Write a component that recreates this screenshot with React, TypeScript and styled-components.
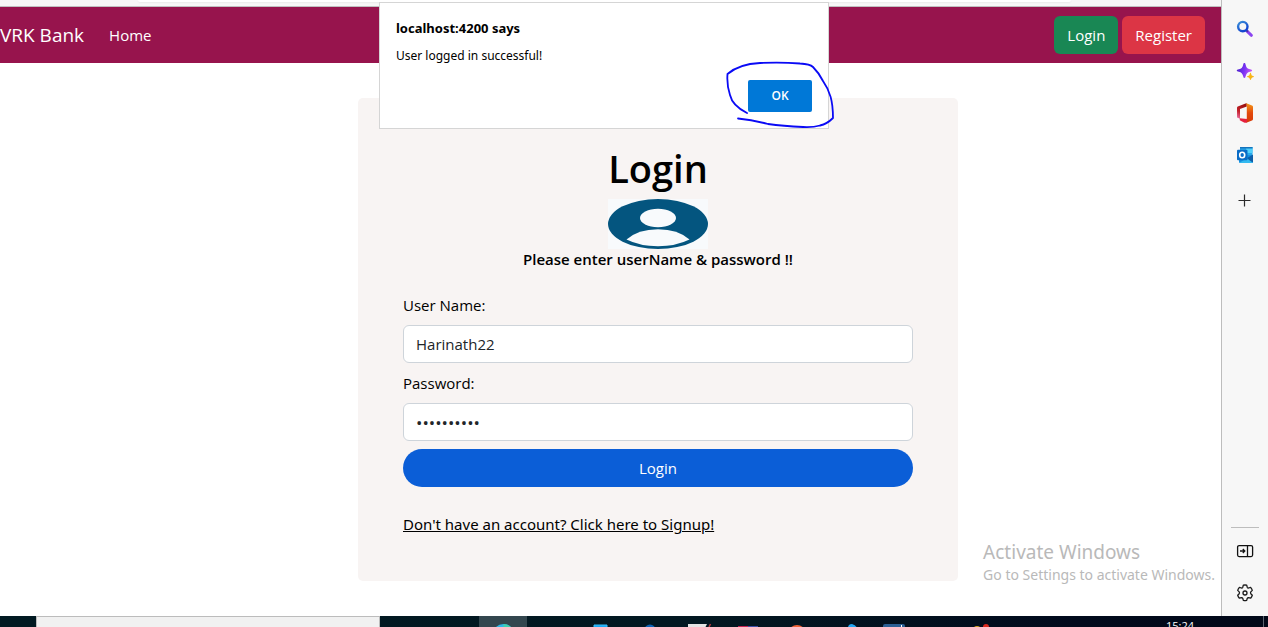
import React from "react";
import styled, { createGlobalStyle } from "styled-components";

const GlobalStyle = createGlobalStyle`
  *, *::before, *::after { box-sizing: border-box; }
  body {
    margin: 0;
    font-family: "Segoe UI", "Open Sans", "Noto Sans", sans-serif;
    font-size: 15px;
    line-height: 24px;
    color: #000;
    background: #fff;
  }
  button, input { font: inherit; }
`;

const wideFont = `"Segoe UI", "Noto Sans", "Open Sans", sans-serif`;

const Desktop = styled.div`
  display: flex;
  flex-direction: column;
  height: 100vh;
  overflow: hidden;
`;

const Browser = styled.div`
  flex: 1;
  min-height: 0;
  display: flex;
  background: #f7f7f7;
`;

const Viewport = styled.div`
  position: relative;
  flex: 1;
  min-width: 0;
  display: flex;
  flex-direction: column;
`;

const ToolbarEdge = styled.div`
  flex: none;
  height: 7px;
  padding: 0 150px 0 138px;
  border-bottom: 1px solid #c0c0c0;
`;

const AddressEdge = styled.div`
  height: 2px;
  background: #fff;
  border-radius: 0 0 8px 8px;
  box-shadow: 0 1px 2px rgba(0, 0, 0, 0.06);
`;

const Page = styled.div`
  flex: 1;
  min-height: 0;
  background: #fff;
`;

const Navbar = styled.nav`
  display: flex;
  align-items: center;
  height: 56px;
  padding-right: 16px;
  background: #97144d;
`;

const NavLink = styled.a<{ $brand?: boolean }>`
  margin-right: ${(p) => (p.$brand ? 25 : 24)}px;
  color: #fff;
  font-size: ${(p) => (p.$brand ? 19 : 15)}px;
  line-height: ${(p) => (p.$brand ? 30 : 24)}px;
  text-decoration: none;
`;

const NavActions = styled.div`
  display: flex;
  gap: 4px;
  margin-left: auto;
`;

const NavButton = styled.button<{ $color: string }>`
  height: 38px;
  padding: 0 13px;
  border: 0;
  border-radius: 6px;
  color: #fff;
  background: ${(p) => p.$color};
`;

const Main = styled.main`
  display: flex;
  justify-content: center;
  padding: 35px 0 0 95px;
`;

const Card = styled.form`
  display: flex;
  flex-direction: column;
  width: 100%;
  max-width: 600px;
  padding: 45px;
  border-radius: 5px;
  background: #f8f4f3;
`;

const Title = styled.h1`
  margin: 0 0 6px;
  font-size: 38px;
  font-weight: 600;
  line-height: 50px;
  text-align: center;
`;

const Avatar = styled.svg`
  align-self: center;
  display: block;
`;

const Subtitle = styled.h2`
  margin: 0 0 24px;
  font-size: 15px;
  font-weight: 600;
  line-height: 20px;
  text-align: center;
`;

const Field = styled.label`
  display: flex;
  flex-direction: column;
  gap: 8px;
  margin-bottom: 8px;
`;

const TextInput = styled.input`
  width: 100%;
  height: 38px;
  padding: 0 12px;
  border: 1px solid #ced4da;
  border-radius: 6px;
  color: #212529;
  background: #fff;
  outline: 0;
  &[type="password"] { font-size: 17px; }
`;

const SubmitButton = styled.button`
  height: 38px;
  margin-bottom: 25px;
  border: 0;
  border-radius: 19px;
  color: #fff;
  background: #0b5ed7;
`;

const SignupLink = styled.a`
  align-self: flex-start;
  color: #000;
  font-family: ${wideFont};
  text-decoration: underline;
`;

const Dialog = styled.div`
  position: absolute;
  top: 2px;
  left: 379px;
  display: flex;
  flex-direction: column;
  width: 450px;
  height: 127px;
  padding: 13px 16px 16px;
  border: 1px solid #d5d5d5;
  background: #fff;
`;

const DialogTitle = styled.h2`
  margin: 0 0 4px;
  font-family: ${wideFont};
  font-size: 13px;
  font-weight: 700;
  line-height: 24px;
`;

const DialogText = styled.p`
  margin: 0;
  font-family: ${wideFont};
  font-size: 12px;
  line-height: 24px;
`;

const DialogButton = styled.button`
  align-self: flex-end;
  width: 64px;
  height: 32px;
  margin-top: auto;
  border: 0;
  border-radius: 2px;
  color: #fff;
  background: #0078d7;
  font-size: 12px;
  font-weight: 600;
`;

const PenMark = styled.svg`
  position: absolute;
  top: 58px;
  left: 345px;
  pointer-events: none;
`;

const Watermark = styled.div`
  position: absolute;
  right: 6px;
  bottom: 30px;
  color: #b9b9b9;
  font-family: ${wideFont};
  font-size: 14px;
  line-height: 22px;
`;

const WatermarkTitle = styled.div`
  font-size: 19px;
  line-height: 24px;
`;

const Sidebar = styled.aside`
  flex: none;
  display: flex;
  flex-direction: column;
  align-items: center;
  width: 47px;
  padding: 8px 0 2px;
  border-left: 1px solid #bdbdbd;
`;

const SideButton = styled.button`
  display: flex;
  align-items: center;
  justify-content: center;
  width: 42px;
  height: 42px;
  padding: 0;
  border: 0;
  background: none;
`;

const AddSlot = styled.div`
  margin: 4px 0 auto;
`;

const SideRule = styled.hr`
  width: 28px;
  margin: 0 0 2px;
  border: 0;
  border-top: 1px solid #bdbdbd;
`;

const Taskbar = styled.footer`
  flex: none;
  display: flex;
  height: 11px;
  overflow: hidden;
  padding-left: 36px;
  background: linear-gradient(90deg, #021a22 0%, #021821 55%, #010a1c 85%, #010818 100%);
`;

const TaskSearch = styled.input`
  width: 344px;
  height: 40px;
  margin-right: 99px;
  border: 1px solid #bcbcbc;
  border-radius: 0;
  background: #f1f1f1;
  outline: 0;
`;

const Task = styled.button<{ $active?: boolean }>`
  width: ${(p) => (p.$active ? 48 : 49)}px;
  margin-right: ${(p) => (p.$active ? 1 : 0)}px;
  height: 40px;
  padding: 0;
  border: 0;
  background: ${(p) => (p.$active ? "#33474f" : "none")};
  svg { display: block; }
`;

const Clock = styled.time`
  margin-left: auto;
  padding-top: 2px;
  color: #fff;
  font-size: 11px;
  line-height: 16px;
`;

const ShowDesktop = styled.div`
  width: 5px;
  height: 40px;
  margin-left: 69px;
  border-left: 1px solid #5c6470;
`;

const SearchIcon = () => (
  <svg width="20" height="20" viewBox="0 0 20 20" fill="none">
    <defs>
      <linearGradient id="lens" x1="0" y1="0" x2="0.6" y2="1">
        <stop offset="0" stopColor="#3b8fd8" />
        <stop offset="1" stopColor="#1243d0" />
      </linearGradient>
    </defs>
    <path d="M12 12.2l4.4 4.1" stroke="#8b45f0" strokeWidth="3" strokeLinecap="round" />
    <path d="M11.3 11.3l1.6 1.5" stroke="#56309f" strokeWidth="2" />
    <circle cx="7.8" cy="7.6" r="4.7" stroke="url(#lens)" strokeWidth="2.4" />
  </svg>
);

const SparkIcon = () => (
  <svg width="20" height="20" viewBox="0 0 20 20">
    <defs>
      <linearGradient id="spark" x1="0" y1="0.3" x2="1" y2="0.6">
        <stop offset="0" stopColor="#4a20c8" />
        <stop offset="0.5" stopColor="#7a33f5" />
        <stop offset="1" stopColor="#d45cf5" />
      </linearGradient>
    </defs>
    <path d="M9.4 2c.8 0 1 .6 1.3 1.900C11.400 6.500 12.300 7.600 15 8.300c1.400.4 2.100.6 2.100 1.200s-.7.8-2.100 1.200c-2.700.7-3.600 1.800-4.300 4.400-.3 1.300-.5 2-1.300 2s-1-.7-1.300-2C7.400 12.500 6.500 11.400 3.900 10.700 2.500 10.300 1.800 10.100 1.800 9.500s.7-.8 2.100-1.200C6.500 7.600 7.400 6.500 8.100 3.900 8.400 2.600 8.600 2 9.400 2z" fill="url(#spark)" />
    <path d="M15.500 11.600c.5 0 .8 2.600 1.300 3.000s2.200.6 2.200 1.100-1.800.7-2.300 1.200-.7 2.100-1.200 2.100-.7-1.600-1.200-2.100-2.300-.7-2.300-1.200 1.700-.7 2.200-1.100.8-3.000 1.300-3.000z" fill="#f7b516" />
  </svg>
);

const OfficeIcon = () => (
  <svg width="20" height="22" viewBox="0 0 20 22">
    <defs>
      <linearGradient id="officeLeft" x1="0.5" y1="0" x2="0" y2="1">
        <stop offset="0" stopColor="#9c1212" />
        <stop offset="0.55" stopColor="#c4222b" />
        <stop offset="1" stopColor="#ef7bb4" />
      </linearGradient>
      <linearGradient id="officeRight" x1="0" y1="0" x2="0" y2="1">
        <stop offset="0" stopColor="#f59a18" />
        <stop offset="0.5" stopColor="#e2490c" />
        <stop offset="1" stopColor="#d63a08" />
      </linearGradient>
    </defs>
    <path d="M10.500 1.400L2.800 4.600Q2 5 2 6v9.500l3 1.200V7l6.800-2.400V1.300z" fill="url(#officeLeft)" />
    <path d="M11.300 1.200l5.700 2.300q1 .4 1 1.500v12q0 1.100-1 1.500l-5.700 2.200-1.300-3 1.800-1V4.500z" fill="url(#officeRight)" />
    <path d="M4.800 16.200l7.200.8v3.300l-1.400.4q-.8 0-1.600-.3l-4.200-2.200z" fill="#e5203d" />
  </svg>
);

const OutlookIcon = () => (
  <svg width="20" height="20" viewBox="0 0 20 20">
    <rect x="5" y="2" width="12.500" height="10" fill="#28a8ea" />
    <rect x="11" y="2" width="6.500" height="6" fill="#50d0fb" />
    <rect x="5" y="2" width="12.500" height="1.500" fill="#1474bd" />
    <path d="M4 10h14v7a1 1 0 0 1-1 1H5a1 1 0 0 1-1-1z" fill="#1490df" />
    <path d="M18 9.500L10.500 14l7.500 3.600z" fill="#0f5ea8" />
    <path d="M4 18l8-4.800 6 4.800z" fill="#34baf0" />
    <rect x="2" y="4.800" width="10.500" height="10.500" rx="1" fill="#0a6cc6" />
    <ellipse cx="7.200" cy="10" rx="2.500" ry="2.700" fill="none" stroke="#fff" strokeWidth="1.600" />
  </svg>
);

const PlusIcon = () => (
  <svg width="20" height="20" viewBox="0 0 20 20">
    <path d="M9.500 3.500v12M3.500 9.500h12" stroke="#2b2b2b" strokeWidth="1.200" />
  </svg>
);

const PanelIcon = () => (
  <svg width="20" height="20" viewBox="0 0 20 20" fill="none" stroke="#111" strokeWidth="1.300">
    <rect x="2.600" y="4.600" width="15" height="11" rx="1.500" />
    <path d="M12.500 4.600v11M5 10h4.500M7.800 8l2 2-2 2" />
  </svg>
);

const GearIcon = () => (
  <svg width="20" height="20" viewBox="0 0 20 20" fill="none" stroke="#1b1b1b" strokeWidth="1.300" strokeLinejoin="round">
    <path d="M8.300 2.200a8 8 0 0 1 3.400 0l.5 2q.4.900 1.400.8l2-.6a8 8 0 0 1 1.700 3l-1.500 1.500q-.6.900 0 1.800l1.500 1.500a8 8 0 0 1-1.700 3l-2-.6q-1-.1-1.400.8l-.5 2a8 8 0 0 1-3.400 0l-.5-2q-.4-.9-1.400-.8l-2 .6a8 8 0 0 1-1.700-3l1.500-1.500q.6-.9 0-1.800L2.700 7.400a8 8 0 0 1 1.700-3l2 .6q1 .1 1.400-.8z" />
    <circle cx="10" cy="10" r="2" />
  </svg>
);

const tools = [
  { name: "Search", Icon: SearchIcon },
  { name: "Discover", Icon: SparkIcon },
  { name: "Office", Icon: OfficeIcon },
  { name: "Outlook", Icon: OutlookIcon },
];

const tasks: { name: string; active?: boolean; art: React.ReactNode }[] = [
  {
    name: "Edge",
    active: true,
    art: (
      <>
        <circle cx="24.500" cy="19" r="11" fill="#2fb8e6" />
        <path d="M24.500 8a11 11 0 0 1 9 5h-9z" fill="#3fcfae" />
      </>
    ),
  },
  { name: "Explorer", art: null },
  { name: "Store", art: <path d="M17 9h13v4H17z" fill="#18a9f5" stroke="#39c0fb" /> },
  { name: "Mail", art: <circle cx="24" cy="14" r="5.500" fill="#0d63b5" /> },
  {
    name: "Notepad",
    art: (
      <>
        <path d="M13 8h19l-2 4H13z" fill="#e4e4e4" />
        <path d="M34 11l1.500-3" stroke="#b3393f" strokeWidth="1.500" />
      </>
    ),
  },
  {
    name: "IDE",
    art: (
      <>
        <path d="M14 10h10v3H14z" fill="#c22353" />
        <path d="M24 10h10v3H24z" fill="#3c4fa8" />
      </>
    ),
  },
  { name: "Postman", art: <circle cx="24" cy="18" r="9" fill="#ee6237" /> },
  { name: "Code", art: <path d="M26 12q0-4 4-4 4 1 5 4z" fill="#22a5f1" /> },
  {
    name: "Database",
    art: (
      <>
        <rect x="12" y="8" width="22" height="10" rx="2" fill="#2a5f94" />
        <path d="M30.500 9v2" stroke="#fff" />
      </>
    ),
  },
  { name: "Tray", art: null },
  {
    name: "Notification",
    art: (
      <>
        <circle cx="8" cy="15" r="5" fill="#d7a522" />
        <circle cx="17" cy="11" r="3" fill="#d8281e" />
      </>
    ),
  },
];

export default function App() {
  return (
    <Desktop>
      <GlobalStyle />
      <Browser>
        <Viewport>
          <ToolbarEdge>
            <AddressEdge />
          </ToolbarEdge>
          <Page>
            <Navbar>
              <NavLink href="#" $brand>VRK Bank</NavLink>
              <NavLink href="#home">Home</NavLink>
              <NavActions>
                <NavButton type="button" $color="#198754">Login</NavButton>
                <NavButton type="button" $color="#dc3545">Register</NavButton>
              </NavActions>
            </Navbar>
            <Main>
              <Card onSubmit={(e) => e.preventDefault()}>
                <Title>Login</Title>
                <Avatar width="100" height="50" viewBox="0 0 100 50" role="img" aria-label="User">
                  <rect width="100" height="50" fill="#f8fafc" />
                  <ellipse cx="50" cy="25" rx="50" ry="25" fill="#04557f" />
                  <ellipse cx="50" cy="19" rx="18" ry="9.200" fill="#f8fafc" />
                  <path d="M18.500 40.500Q30 30.200 50 30.200T81.500 40.500Q68 47.200 50 47.200T18.500 40.500z" fill="#f8fafc" />
                </Avatar>
                <Subtitle>Please enter userName &amp; password !!</Subtitle>
                <Field>
                  User Name:
                  <TextInput type="text" defaultValue="Harinath22" />
                </Field>
                <Field>
                  Password:
                  <TextInput type="password" defaultValue="harinath22" />
                </Field>
                <SubmitButton type="submit">Login</SubmitButton>
                <SignupLink href="#signup">Don't have an account? Click here to Signup!</SignupLink>
              </Card>
            </Main>
          </Page>
          <Watermark>
            <WatermarkTitle>Activate Windows</WatermarkTitle>
            Go to Settings to activate Windows.
          </Watermark>
          <Dialog role="alertdialog" aria-labelledby="alert-title">
            <DialogTitle id="alert-title">localhost:4200 says</DialogTitle>
            <DialogText>User logged in successful!</DialogText>
            <DialogButton type="button">OK</DialogButton>
            <PenMark width="112" height="70" viewBox="0 0 112 70" fill="none" aria-hidden="true">
              <path
                d="M22 52C16 49 7 43 5 34C2 25 2 19 2.500 13Q14 3 35 2Q56 1 75 2.500Q85 3 88 6Q94 12 98 20C105 30 108 40 108 57Q102 63 95 64.500Q88 66.500 78 66Q58 65 43 63Q28 59 13 57.500"
                stroke="#0a0af5"
                strokeWidth="1.800"
                strokeLinecap="round"
                strokeLinejoin="round"
              />
            </PenMark>
          </Dialog>
        </Viewport>
        <Sidebar>
          {tools.map(({ name, Icon }) => (
            <SideButton key={name} type="button" aria-label={name}>
              <Icon />
            </SideButton>
          ))}
          <AddSlot>
            <SideButton type="button" aria-label="Customize">
              <PlusIcon />
            </SideButton>
          </AddSlot>
          <SideRule />
          <SideButton type="button" aria-label="Hide sidebar">
            <PanelIcon />
          </SideButton>
          <SideButton type="button" aria-label="Settings">
            <GearIcon />
          </SideButton>
        </Sidebar>
      </Browser>
      <Taskbar>
        <TaskSearch type="search" aria-label="Search Windows" />
        {tasks.map(({ name, active, art }) => (
          <Task key={name} type="button" aria-label={name} $active={active}>
            <svg width="48" height="40" viewBox="0 0 48 40">{art}</svg>
          </Task>
        ))}
        <Clock>15:24</Clock>
        <ShowDesktop />
      </Taskbar>
    </Desktop>
  );
}
